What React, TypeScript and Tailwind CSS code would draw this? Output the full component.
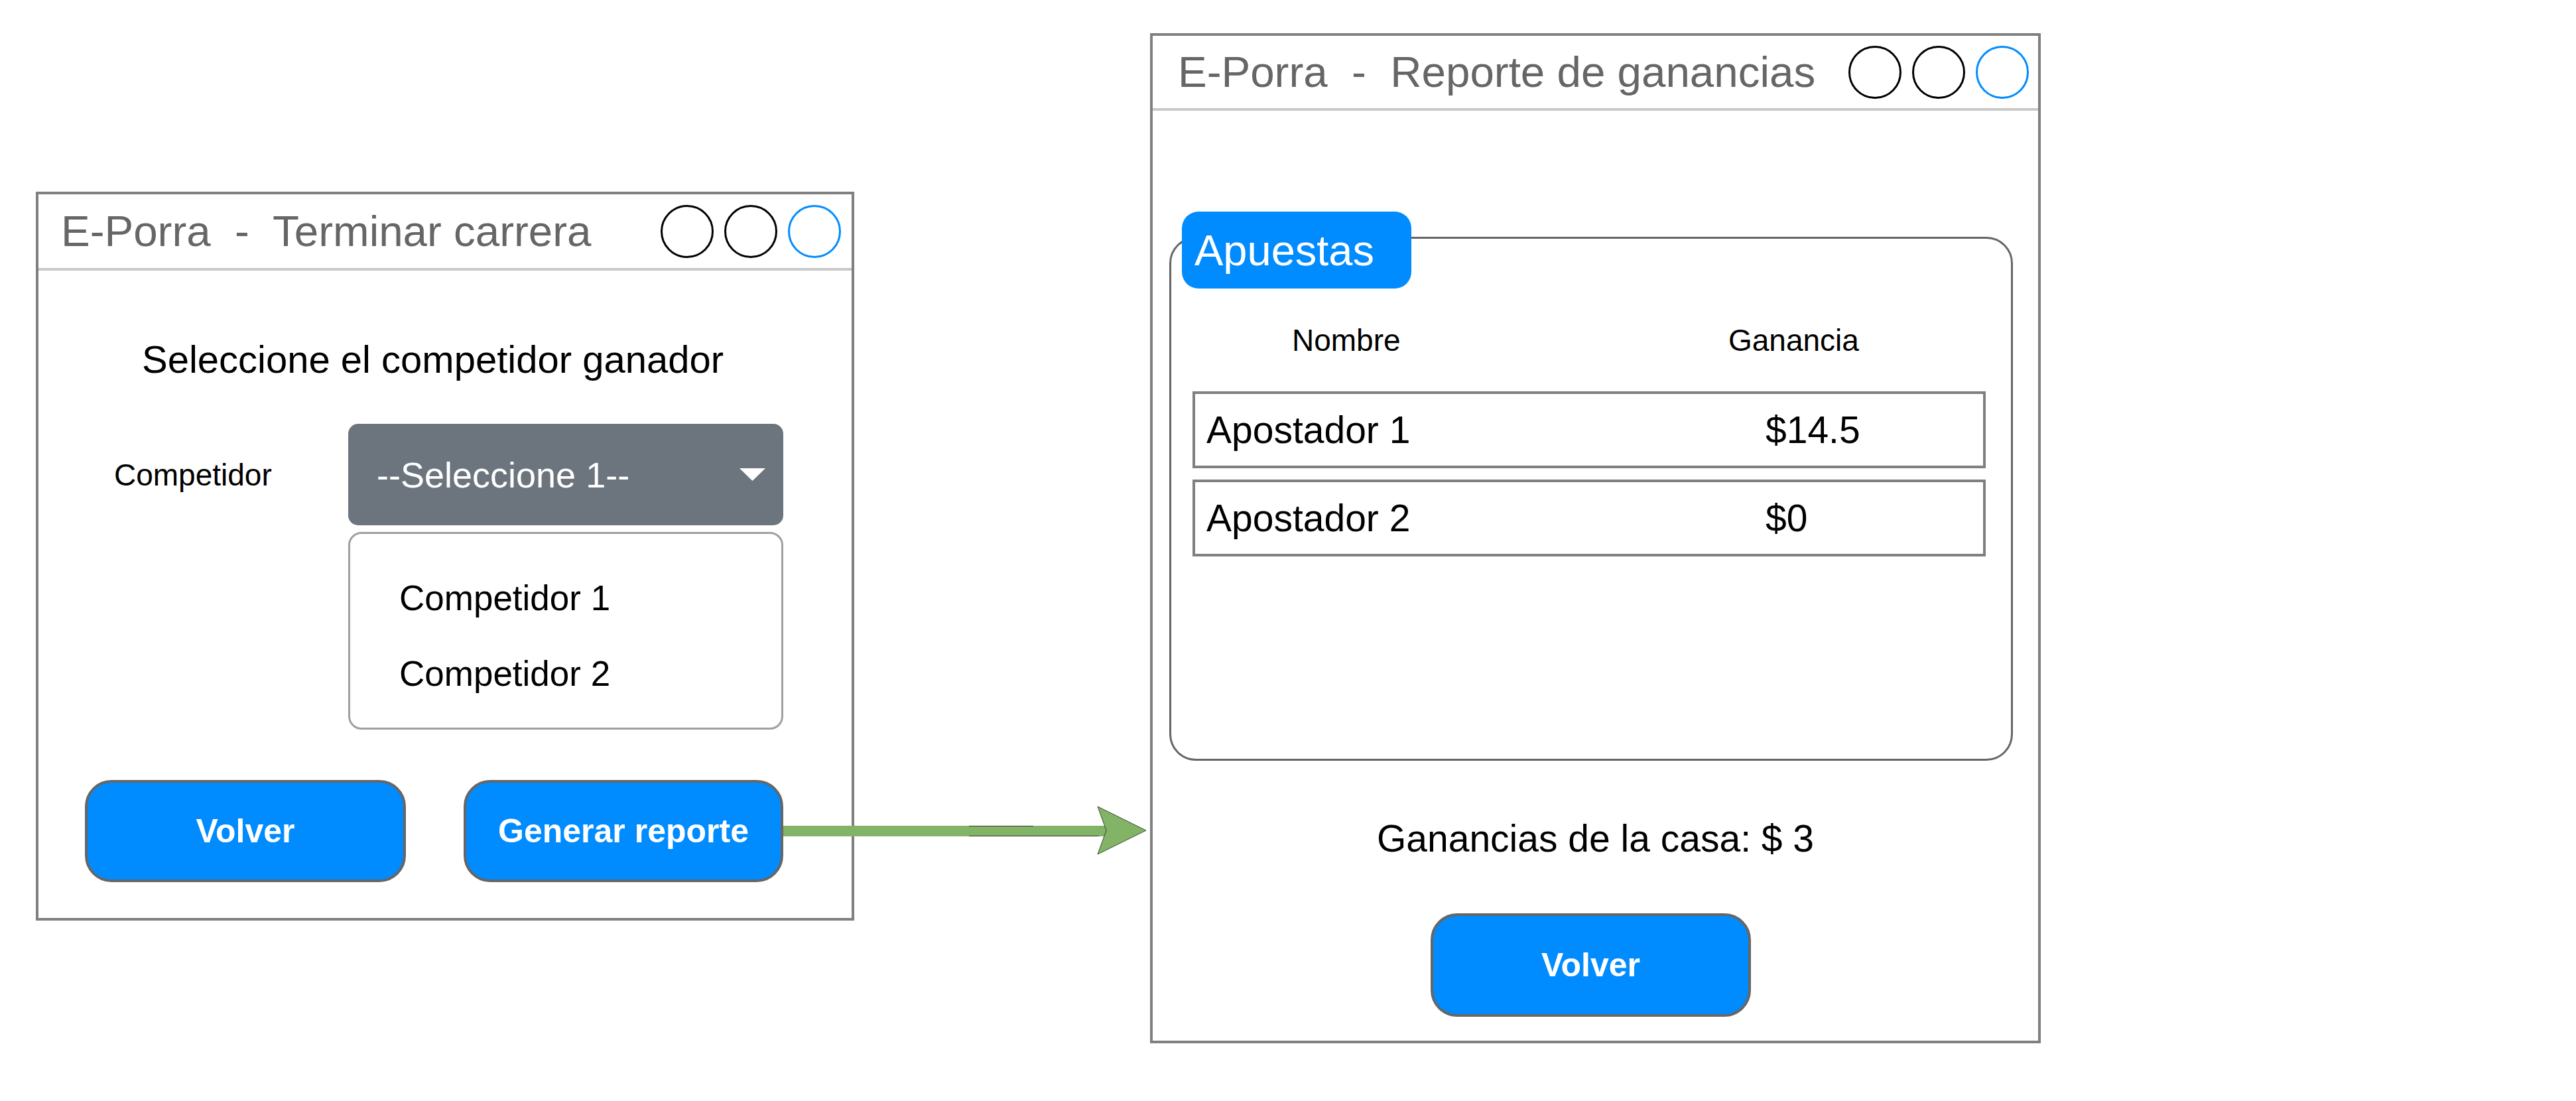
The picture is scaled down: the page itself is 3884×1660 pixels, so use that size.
import React from "react";

type Row = {
  name: string;
  amount: string;
};

const ROWS: Row[] = [
  { name: "Apostador 1", amount: "$14.5" },
  { name: "Apostador 2", amount: "$0" },
];

function WindowButtons() {
  return (
    <div className="flex gap-[16px]">
      <div className="w-[80px] h-[80px] rounded-full border-[3px] border-black" />
      <div className="w-[80px] h-[80px] rounded-full border-[3px] border-black" />
      <div className="w-[80px] h-[80px] rounded-full border-[3px] border-[#008cff]" />
    </div>
  );
}

function BlueButton({ label, className }: { label: string; className: string }) {
  return (
    <div
      className={
        "flex items-center justify-center rounded-[40px] border-4 border-[#666666] bg-[#008cff] text-[50px] font-bold text-white " +
        className
      }
    >
      {label}
    </div>
  );
}

export default function App() {
  return (
    <div className="relative flex items-start w-[3884px] h-[1660px] bg-white font-['Liberation_Sans',Arial,sans-serif] text-black">
      {/* Terminar carrera */}
      <div className="ml-[54px] mt-[289px] w-[1234px] h-[1099px] shrink-0 border-4 border-[#808080] flex flex-col">
        <div className="h-[115px] border-b-4 border-[#c8c8c8] flex items-center justify-between pl-[34px] pr-[16px]">
          <span className="text-[65.5px] leading-none text-[#666666] whitespace-pre">
            E-Porra  -  Terminar carrera
          </span>
          <WindowButtons />
        </div>

        <p className="mt-[101px] ml-[156px] text-[58px] leading-[66px]">
          Seleccione el competidor ganador
        </p>

        <div className="mt-[64px] flex items-center">
          <span className="w-[467px] pl-[114px] text-[46px] leading-none">Competidor</span>
          <div className="w-[656px] h-[153px] rounded-[15px] bg-[#6c757d] flex items-center justify-between pl-[43px] pr-[27px]">
            <span className="text-[54px] leading-none text-white">--Seleccione 1--</span>
            <svg width="39" height="19" viewBox="0 0 39 19">
              <polygon points="0,0 39,0 19.5,19" fill="#ffffff" />
            </svg>
          </div>
        </div>

        <div className="ml-[467px] mt-[10px] w-[656px] h-[298px] rounded-[20px] border-[3px] border-[#a0a0a0] flex flex-col pl-[74px] pt-[67px]">
          <span className="text-[53px] leading-[60px]">Competidor 1</span>
          <span className="mt-[54px] text-[53px] leading-[60px]">Competidor 2</span>
        </div>

        <div className="mt-[76px] ml-[70px] flex gap-[87px]">
          <BlueButton label="Volver" className="w-[484px] h-[154px]" />
          <BlueButton label="Generar reporte" className="w-[482px] h-[154px]" />
        </div>
      </div>

      {/* Reporte de ganancias */}
      <div className="ml-[446px] mt-[50px] w-[1343px] h-[1523px] shrink-0 border-4 border-[#808080] flex flex-col">
        <div className="h-[113px] border-b-4 border-[#c8c8c8] flex items-center justify-between pl-[38px] pr-[14px]">
          <span className="text-[65.5px] leading-none text-[#666666] whitespace-pre">
            E-Porra  -  Reporte de ganancias
          </span>
          <WindowButtons />
        </div>

        <div className="relative ml-[25px] mt-[190px] w-[1272px] h-[790px] rounded-[40px] border-[3px] border-[#666666] flex flex-col">
          <div className="absolute left-[16px] top-[-41px] w-[346px] h-[116px] rounded-[25px] bg-[#008cff] flex items-center pl-[19px]">
            <span className="text-[65px] leading-none text-white">Apuestas</span>
          </div>

          <div className="mt-[126px] flex text-[46px] leading-[54px]">
            <span className="w-[840px] pl-[182px]">Nombre</span>
            <span>Ganancia</span>
          </div>

          <div className="mt-[50px] ml-[32px] flex flex-col gap-[17px]">
            {ROWS.map((row) => (
              <div
                key={row.name}
                className="w-[1196px] h-[116px] border-4 border-[#808080] flex items-center pl-[17px] text-[57px] leading-none"
              >
                <span className="w-[843px]">{row.name}</span>
                <span>{row.amount}</span>
              </div>
            ))}
          </div>
        </div>

        <p className="mt-[84px] text-center text-[57px] leading-[66px]">
          Ganancias de la casa: $ 3
        </p>

        <BlueButton label="Volver" className="mt-[80px] ml-[419px] w-[483px] h-[156px]" />
      </div>

      {/* connector arrow */}
      <svg
        className="absolute left-0 top-0 pointer-events-none"
        width="3884"
        height="1660"
        viewBox="0 0 3884 1660"
      >
        <rect x="1181" y="1245" width="488" height="16" fill="#82b366" />
        <line x1="1461" y1="1245.5" x2="1558" y2="1245.5" stroke="#333333" strokeWidth="1" />
        <line x1="1461" y1="1260.5" x2="1657" y2="1260.5" stroke="#333333" strokeWidth="1" />
        <polygon
          points="1655,1216 1728,1252 1655,1288 1668,1252"
          fill="#82b366"
          stroke="#3a4a30"
          strokeWidth="1"
          strokeLinejoin="miter"
        />
      </svg>
    </div>
  );
}
